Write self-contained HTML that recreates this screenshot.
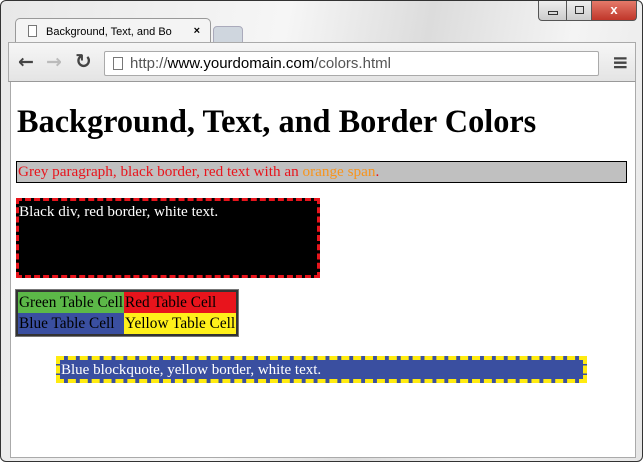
<!DOCTYPE html>
<html><head><style>
*{margin:0;padding:0;box-sizing:border-box}
body{width:643px;height:464px;background:#fff;position:relative;overflow:hidden;font-family:"Liberation Serif",serif}
.win{position:absolute;left:0;top:0;width:643px;height:462px;border:1px solid #333;border-radius:6px;background:linear-gradient(100deg,#e8e8e8 0%,#f6f6f6 40%,#dcdcdc 60%,#f4f4f4 80%,#e6e6e6 100%)}
.ctl{position:absolute;top:0;height:20px;border:1px solid #555;border-top:none}
.tab{position:absolute;left:14px;top:17px;width:196px;height:25px;background:#f4f4f4;border:1px solid #999;border-bottom:none;border-radius:5px 5px 0 0;font:11px "Liberation Sans",sans-serif;padding:7px 0 0 30px}
.tool{position:absolute;left:7px;top:41px;width:628px;height:40px;background:linear-gradient(#f6f6f6,#e4e4e4);border:1px solid #aaa;border-bottom:1px solid #999}
.addr{position:absolute;left:103px;top:50px;width:495px;height:25px;background:#fff;border:1px solid #aaa;border-radius:2px;font:15px "Liberation Sans",sans-serif;color:#555;padding:3px 0 0 25px}
.content{position:absolute;left:9px;top:81px;width:626px;height:376px;background:#fff;border:1px solid #aaa;border-top:none}
h1{position:absolute;left:17px;top:103px;font-size:32.3px;font-weight:bold;white-space:nowrap}
.p{position:absolute;left:16px;top:161px;width:611px;height:22px;background:#c0c0c0;border:1px solid #000;color:#e8141c;font-size:15.2px;padding:1px 0 0 1px;white-space:nowrap}
.bd{position:absolute;left:16px;top:198px;width:304px;height:80px;background:#000;border:3px dashed #e8141c;color:#fff;font-size:15.2px;padding:2px 0 0 0}
table{position:absolute;left:16px;top:290px;border:2px solid #333;border-collapse:collapse;font-size:15.3px;outline:1px solid #777}
td{height:22px;padding:0 1px;white-space:nowrap}
.bq{position:absolute;left:56px;top:356px;width:531px;height:27px;background:#3a4fa0;border:4px dashed #ffeb10;color:#fff;font-size:15px;padding:2px 0 0 1px;white-space:nowrap}
</style></head><body>
<div class="win">
<div class="ctl" style="left:537px;width:29px;background:linear-gradient(#eee,#ccc);border-radius:0 0 0 4px"><div style="position:absolute;left:9px;top:10px;width:10px;height:4px;border:1px solid #333"></div></div>
<div class="ctl" style="left:565px;width:26px;background:linear-gradient(#eee,#ccc)"><div style="position:absolute;left:8px;top:5px;width:9px;height:8px;border:1px solid #333"></div></div>
<div class="ctl" style="left:590px;width:46px;background:linear-gradient(#e47a6a,#c0362a);border-radius:0 0 4px 0;color:#fff;font:bold 13px 'Liberation Sans',sans-serif;text-align:center;line-height:17px">x</div>
<div class="tab"><span style="position:absolute;left:12px;top:6px;width:9px;height:12px;border:1px solid #777;background:#fff"></span>Background, Text, and Bo<span style="position:absolute;right:10px;top:6px;font-weight:bold">×</span></div>
<div style="position:absolute;left:212px;top:25px;width:30px;height:17px;background:#cfd6de;border:1px solid #aab;border-radius:4px 4px 0 0"></div>
<div class="tool">
<span style="position:absolute;left:9px;top:8px;font:bold 19px 'DejaVu Sans',sans-serif;color:#444">←</span>
<span style="position:absolute;left:37px;top:8px;font:bold 19px 'DejaVu Sans',sans-serif;color:#bbb">→</span>
<span style="position:absolute;left:66px;top:6px;font:bold 20px 'DejaVu Sans',sans-serif;color:#444">↻</span>
<span style="position:absolute;left:603px;top:7px;font:bold 20px 'DejaVu Sans',sans-serif;color:#444">≡</span>
</div>
<div class="addr"><span style="position:absolute;left:8px;top:5px;width:10px;height:13px;border:1px solid #777"></span>http://<span style="color:#000">www.yourdomain.com</span>/colors.html</div>
<div class="content"></div>
</div>
<h1>Background, Text, and Border Colors</h1>
<div class="p">Grey paragraph, black border, red text with an <span style="color:#f7941d">orange span</span>.</div>
<div class="bd">Black div, red border, white text.</div>
<table><tr><td style="background:#5cb848">Green Table Cell</td><td style="background:#e8141c">Red Table Cell</td></tr>
<tr><td style="background:#3a4fa0">Blue Table Cell</td><td style="background:#fff01a">Yellow Table Cell</td></tr></table>
<div class="bq">Blue blockquote, yellow border, white text.</div>
</body></html>
